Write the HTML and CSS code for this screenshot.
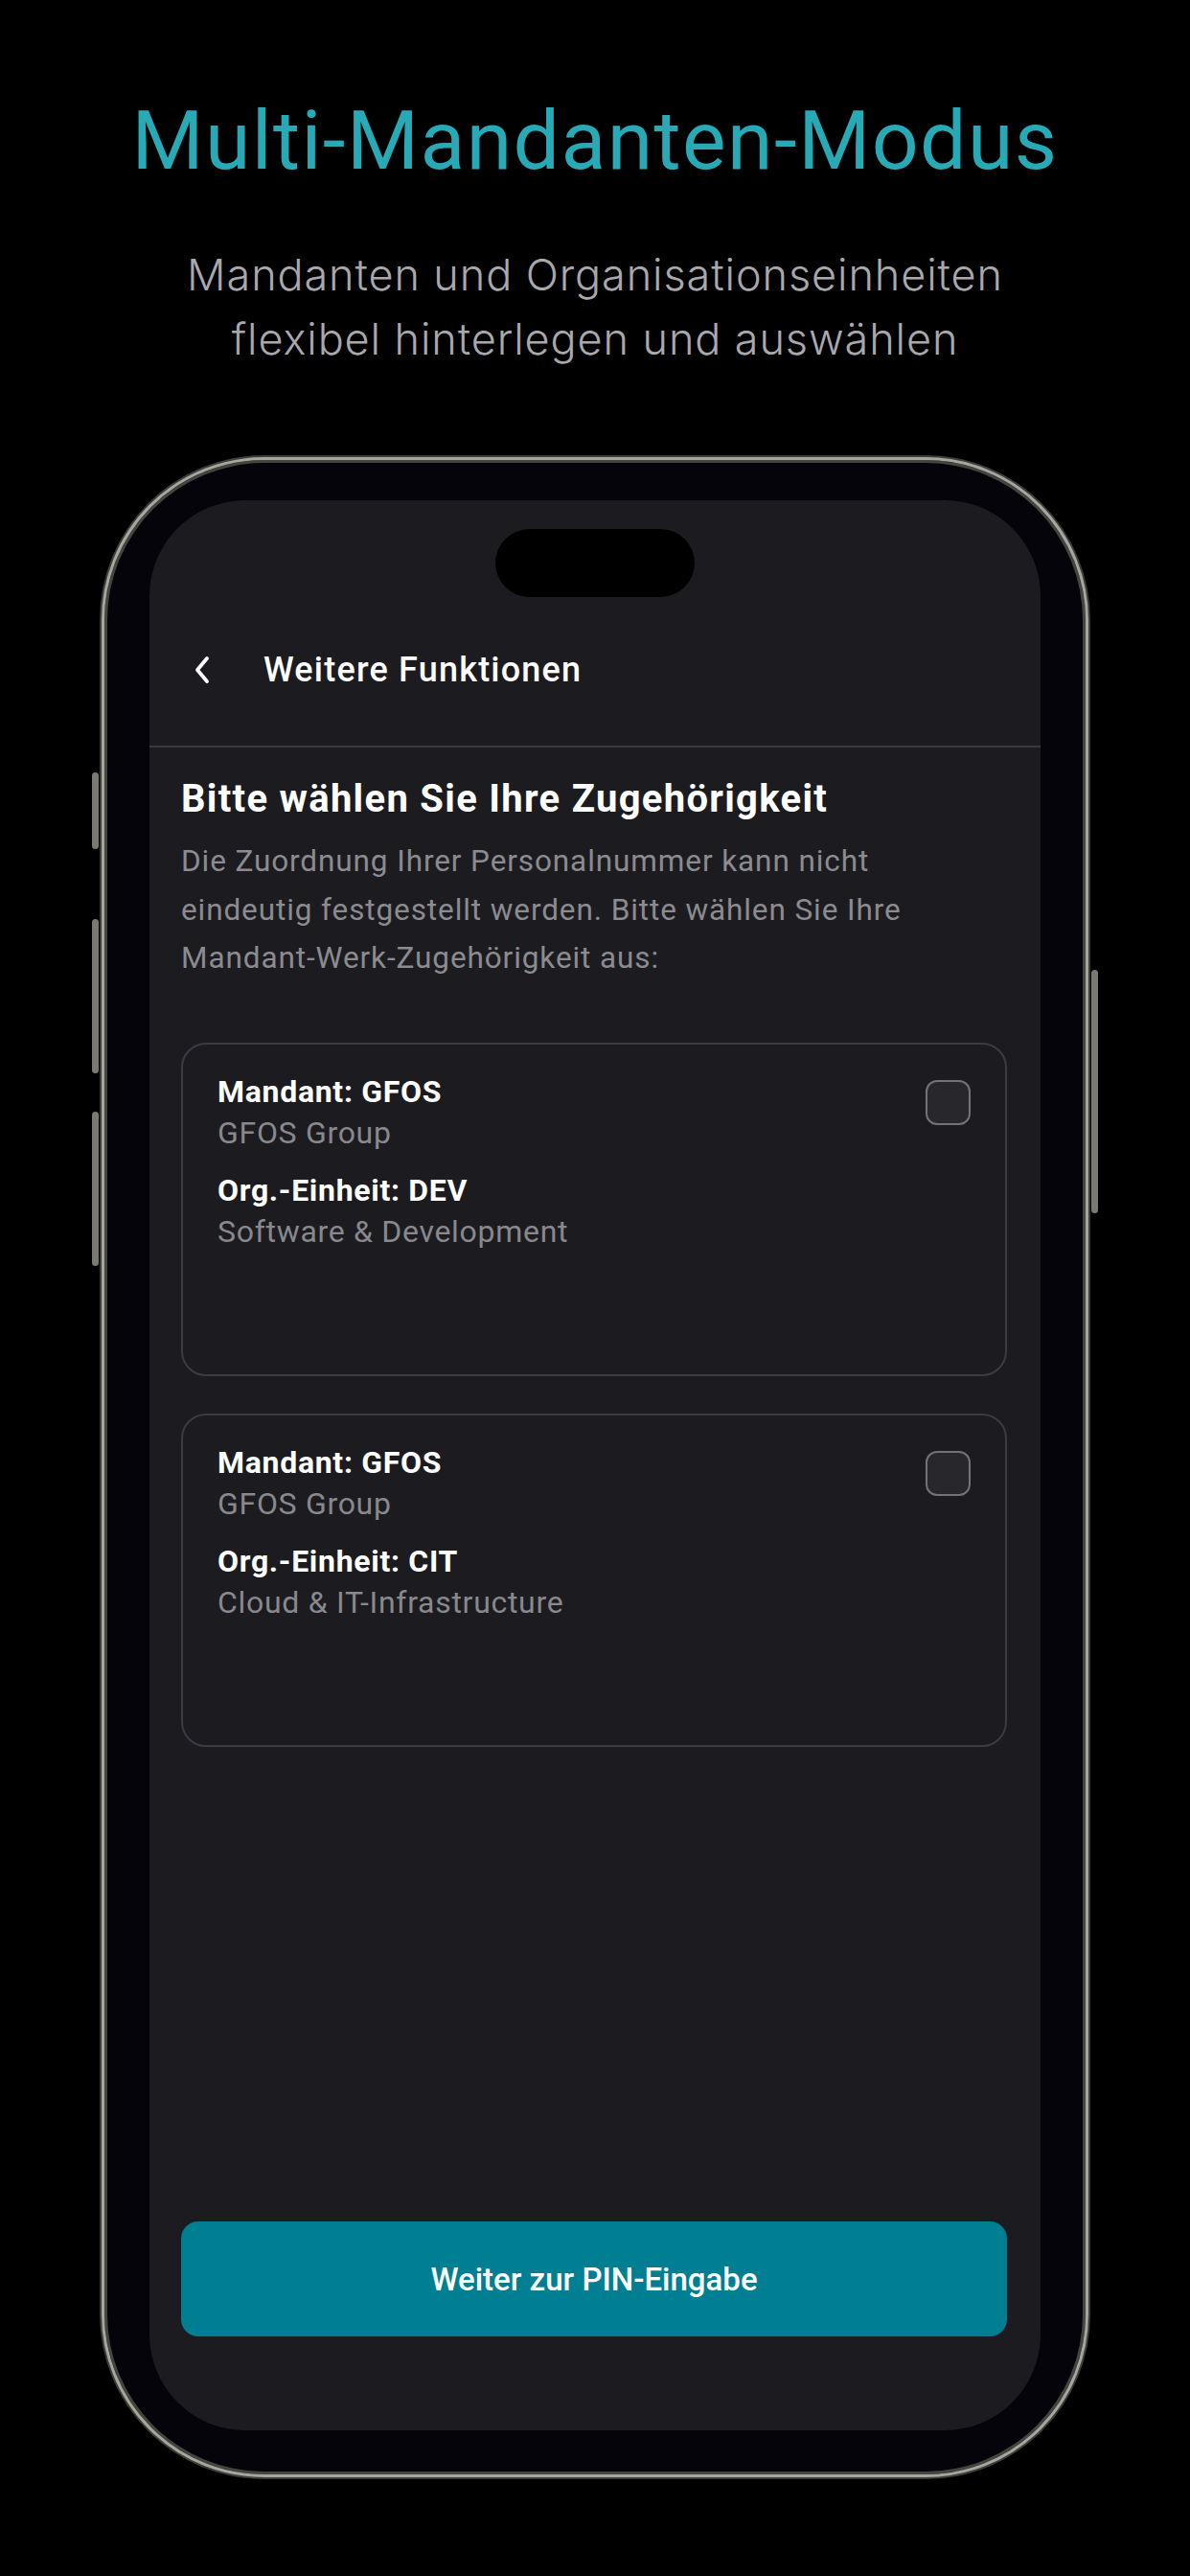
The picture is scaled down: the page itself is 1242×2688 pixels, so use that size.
FILE: index.html
```html
<!DOCTYPE html>
<html lang="de">
<head>
<meta charset="utf-8">
<title>Multi-Mandanten-Modus</title>
<link rel="stylesheet" href="styles.css">
</head>
<body>
<header class="intro">
  <h1 class="intro-title">Multi-Mandanten-Modus</h1>
  <p class="intro-sub">Mandanten und Organisationseinheiten<br>flexibel hinterlegen und auswählen</p>
</header>

<div class="phone">
  <span class="side-btn side-left btn-a"></span>
  <span class="side-btn side-left btn-b"></span>
  <span class="side-btn side-left btn-c"></span>
  <span class="side-btn side-right btn-d"></span>
  <div class="screen">
    <div class="island"></div>
    <div class="appbar">
      <svg class="back" viewBox="0 0 18 30" width="18" height="30" aria-hidden="true">
        <path d="M14 3 L4 15 L14 27" fill="none" stroke="#ffffff" stroke-width="3.8" stroke-linecap="round" stroke-linejoin="round"/>
      </svg>
      <span class="appbar-title">Weitere Funktionen</span>
    </div>
    <div class="divider"></div>
    <main class="content">
      <h2 class="heading">Bitte wählen Sie Ihre Zugehörigkeit</h2>
      <p class="lead">Die Zuordnung Ihrer Personalnummer kann nicht<br>eindeutig festgestellt werden. Bitte wählen Sie Ihre<br>Mandant-Werk-Zugehörigkeit aus:</p>

      <div class="cards">
        <div class="card">
          <div class="card-text">
            <div class="label">Mandant: GFOS</div>
            <div class="value">GFOS Group</div>
            <div class="label group">Org.-Einheit: DEV</div>
            <div class="value">Software &amp; Development</div>
          </div>
          <span class="checkbox"></span>
        </div>
        <div class="card">
          <div class="card-text">
            <div class="label">Mandant: GFOS</div>
            <div class="value">GFOS Group</div>
            <div class="label group">Org.-Einheit: CIT</div>
            <div class="value">Cloud &amp; IT-Infrastructure</div>
          </div>
          <span class="checkbox"></span>
        </div>
      </div>

      <button class="primary" type="button">Weiter zur PIN-Eingabe</button>
    </main>
  </div>
</div>
</body>
</html>
```

FILE: styles.css
```css
html, body {
  margin: 0;
  padding: 0;
}

body {
  width: 1242px;
  height: 2688px;
  overflow: hidden;
  background: #000000;
  font-family: Roboto, "Noto Sans", "Liberation Sans", sans-serif;
}

.intro {
  padding-top: 97px;
  text-align: center;
}

.intro-title {
  margin: 0;
  font-size: 86px;
  line-height: 100px;
  font-weight: 400;
  letter-spacing: 1.4px;
  color: #27a9b6;
}

.intro-sub {
  margin: 56px 0 0;
  font-family: Inter, "Open Sans", Roboto, sans-serif;
  font-size: 45px;
  line-height: 67px;
  font-weight: 300;
  letter-spacing: 0.9px;
  color: #a8a8ad;
}

.phone {
  position: relative;
  box-sizing: border-box;
  width: 1030px;
  height: 2108px;
  margin: 90px 0 0 106px;
  padding: 42px 47px 46px 47px;
  border-radius: 170px;
  border: 3px solid #a6a69e;
  background: #04040a;
  box-shadow: 0 0 0 2px #3d3d3a, inset 0 0 0 3px #45453f;
}

.side-btn {
  position: absolute;
  width: 7px;
  border-radius: 4px;
  background: #7a7a73;
}

.side-left { left: -13px; }
.side-right { right: -13px; }
.btn-a { top: 326px; height: 80px; }
.btn-b { top: 479px; height: 161px; }
.btn-c { top: 680px; height: 161px; }
.btn-d { top: 532px; height: 254px; }

.screen {
  box-sizing: border-box;
  height: 100%;
  display: flex;
  flex-direction: column;
  background: #1c1b20;
  border-radius: 100px;
  overflow: hidden;
}

.island {
  align-self: center;
  width: 208px;
  height: 71px;
  margin-top: 30px;
  border-radius: 36px;
  background: #000000;
}

.appbar {
  display: flex;
  align-items: center;
  height: 151px;
  padding: 0 0 4px 46px;
}

.back {
  display: block;
}

.appbar-title {
  margin-left: 55px;
  font-size: 36px;
  font-weight: 500;
  letter-spacing: 1.2px;
  color: #ffffff;
}

.divider {
  height: 2px;
  background: #3a3a40;
}

.content {
  flex: 1;
  display: flex;
  flex-direction: column;
  padding: 0 35px 98px 33px;
}

.heading {
  margin: 30px 0 0;
  font-size: 40px;
  line-height: 48px;
  font-weight: 700;
  letter-spacing: 1.3px;
  color: #ffffff;
}

.lead {
  margin: 16px 0 0;
  font-size: 31.5px;
  line-height: 50.5px;
  font-weight: 400;
  letter-spacing: 0.9px;
  color: #8b8b90;
}

.cards {
  display: flex;
  flex-direction: column;
  gap: 39px;
  margin-top: 62px;
}

.card {
  box-sizing: border-box;
  height: 348px;
  display: flex;
  justify-content: space-between;
  align-items: flex-start;
  padding: 28px 36px 0 36px;
  border: 2px solid #3b3b42;
  border-radius: 26px;
}

.label {
  font-size: 32px;
  line-height: 43px;
  font-weight: 700;
  letter-spacing: 0.7px;
  color: #ffffff;
}

.label.group {
  margin-top: 17px;
}

.value {
  font-size: 32px;
  line-height: 43px;
  font-weight: 400;
  letter-spacing: 0.7px;
  color: #88888d;
}

.checkbox {
  box-sizing: border-box;
  width: 47px;
  height: 47px;
  margin-top: 9px;
  border: 2.5px solid #727278;
  border-radius: 12px;
  background: #27272c;
}

.primary {
  margin-top: auto;
  height: 120px;
  border: none;
  border-radius: 18px;
  background: #007f92;
  color: #ffffff;
  font-family: Roboto, "Noto Sans", "Liberation Sans", sans-serif;
  font-size: 33px;
  font-weight: 500;
}
```
